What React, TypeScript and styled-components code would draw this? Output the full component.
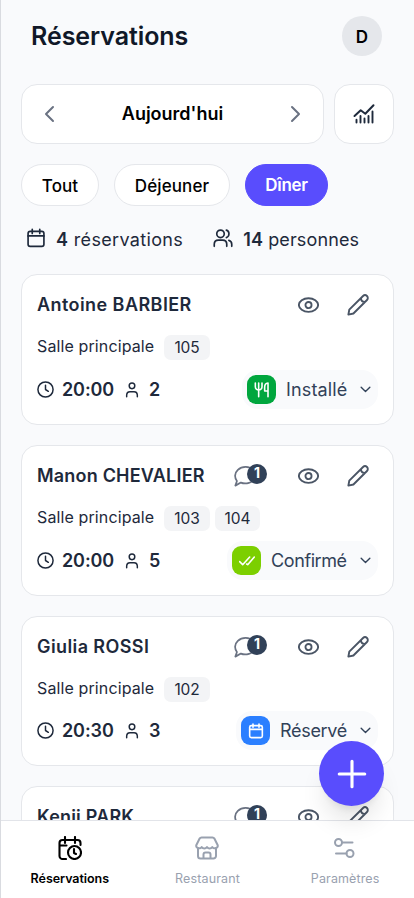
import React from 'react';
import styled, { createGlobalStyle } from 'styled-components';

const GlobalStyle = createGlobalStyle`
  *, *::before, *::after { box-sizing: border-box; }
  html, body { margin: 0; height: 100%; overflow: hidden; }
  body { font-family: Inter, "Liberation Sans", sans-serif; color: #1e293b; background: #f9fafc; }
  button { font: inherit; color: inherit; border: 0; background: none; padding: 0; margin: 0; }
  svg { display: block; flex: none; }
`;

const Screen = styled.div`
  height: 898px;
  display: flex;
  flex-direction: column;
  border-left: 1px solid #d9dbe0;
  background: #f9fafc;
  overflow: hidden;
`;
const Content = styled.main`
  flex: 1;
  min-height: 0;
  overflow: hidden;
  padding: 16px 20px 0;
`;
const Header = styled.header`
  display: flex;
  align-items: center;
  justify-content: space-between;
  height: 40px;
  padding: 0 12px 0 10px;
`;
const Title = styled.h1`
  margin: 0;
  font-size: 25px;
  line-height: 40px;
  font-weight: 600;
  letter-spacing: -0.07px;
  color: #101828;
`;
const Avatar = styled.div`
  width: 40px;
  height: 40px;
  border-radius: 50%;
  background: #e5e7eb;
  color: #000;
  font-size: 17px;
  font-weight: 600;
  line-height: 42px;
  text-align: center;
`;
const DateBar = styled.div`
  display: flex;
  gap: 10px;
  height: 60px;
  margin-top: 28px;
`;
const DateCard = styled.div`
  width: 303px;
  display: flex;
  align-items: center;
  justify-content: space-between;
  padding: 0 16px;
  border: 1px solid #e5e7eb;
  border-radius: 16px;
  background: #fff;
  color: #6a7282;
`;
const DateLabel = styled.span`
  padding-bottom: 1px;
  font-size: 18px;
  font-weight: 600;
  color: #000;
`;
const StatsButton = styled.button`
  width: 60px;
  display: flex;
  align-items: center;
  justify-content: center;
  border: 1px solid #e5e7eb;
  border-radius: 16px;
  background: #fff;
`;
const Filters = styled.div`
  display: flex;
  gap: 15px;
  height: 42px;
  margin-top: 20px;
`;
const Filter = styled.button<{ $width: number; $active?: boolean }>`
  width: ${p => p.$width}px;
  border-radius: 21px;
  border: 1px solid ${p => (p.$active ? '#594dfd' : '#e5e7eb')};
  background: ${p => (p.$active ? '#594dfd' : '#fff')};
  color: ${p => (p.$active ? '#fff' : '#000')};
  font-size: 17px;
  font-weight: ${p => (p.$active ? 600 : 500)};
  letter-spacing: ${p => (p.$active ? -0.3 : 0.1)}px;
  padding-top: ${p => (p.$active ? 0 : 2)}px;
`;
const Totals = styled.div`
  display: flex;
  gap: 30px;
  height: 28px;
  margin-top: 19px;
  padding-left: 5px;
`;
const Total = styled.div<{ $spacing: number }>`
  display: flex;
  align-items: center;
  gap: 10px;
  font-size: 18px;
  line-height: 28px;
  letter-spacing: ${p => p.$spacing}px;
  b { font-weight: 600; }
  span { padding-top: 1px; }
  svg { margin-bottom: 3px; }
`;
const List = styled.div`
  display: flex;
  flex-direction: column;
  gap: 20px;
  margin-top: 21px;
`;
const Card = styled.article`
  height: 151px;
  flex: none;
  padding: 0 15px;
  border: 1px solid #e5e7eb;
  border-radius: 16px;
  background: #fff;
  &:nth-child(3) { height: 150px; }
`;
const CardHead = styled.div`
  display: flex;
  align-items: center;
  height: 24px;
  margin-top: 18px;
`;
const Name = styled.h2<{ $spacing: number }>`
  flex: 1;
  margin: 0;
  font-size: 18px;
  line-height: 24px;
  font-weight: 600;
  letter-spacing: ${p => p.$spacing}px;
  white-space: nowrap;
`;
const Actions = styled.div`
  display: flex;
  align-items: center;
  gap: 28px;
  padding-right: 9px;
  color: #4a5565;
`;
const Notes = styled.div`
  position: relative;
  width: 36px;
  color: #6a7282;
`;
const NoteCount = styled.span`
  position: absolute;
  left: 13px;
  top: -1px;
  width: 20px;
  height: 20px;
  border-radius: 50%;
  background: #314158;
  color: #fff;
  font-size: 14px;
  line-height: 18px;
  font-weight: 700;
  text-align: center;
`;
const Place = styled.div`
  display: flex;
  align-items: center;
  height: 25px;
  margin-top: 18px;
  font-size: 16px;
  letter-spacing: 0.12px;
`;
const Room = styled.span`
  width: 127px;
  padding-bottom: 3px;
  white-space: nowrap;
`;
const Table = styled.span`
  width: 46px;
  height: 25px;
  margin-right: 5px;
  border-radius: 7px;
  background: #f3f4f6;
  text-align: center;
  font-size: 15.5px;
  line-height: 25px;
  letter-spacing: -0.1px;
  & + & { width: 45px; }
`;
const CardFoot = styled.div`
  display: flex;
  align-items: center;
  justify-content: space-between;
  height: 39px;
  margin-top: 10px;
  ${Card}:nth-child(3) & { margin-top: 9px; }
`;
const Facts = styled.div`
  display: flex;
  align-items: center;
  font-size: 18px;
  font-weight: 600;
`;
const Time = styled.span`
  width: 62px;
  margin-left: 8px;
  letter-spacing: -0.1px;
`;
const Guests = styled.span`
  margin-left: 9px;
`;
const Status = styled.button<{ $width: number }>`
  width: ${p => p.$width}px;
  height: 39px;
  display: flex;
  align-items: center;
  padding: 0 6px 0 5px;
  border-radius: 16px;
  background: #f9fafc;
  color: #314158;
  font-size: 18px;
`;
const StatusIcon = styled.span<{ $color: string }>`
  width: 29px;
  height: 29px;
  flex: none;
  display: flex;
  align-items: center;
  justify-content: center;
  border-radius: 9px;
  background: ${p => p.$color};
  color: #fff;
`;
const StatusText = styled.span<{ $spacing: number }>`
  flex: 1;
  margin-left: 10px;
  text-align: left;
  letter-spacing: ${p => p.$spacing}px;
`;
const Nav = styled.nav`
  height: 78px;
  flex: none;
  display: grid;
  grid-template-columns: repeat(3, 1fr);
  border-top: 1px solid #e2e4e9;
  background: #fff;
`;
const NavItem = styled.button<{ $active?: boolean }>`
  display: flex;
  flex-direction: column;
  align-items: center;
  padding-top: 15px;
  gap: 9px;
  color: ${p => (p.$active ? '#000' : '#99a1af')};
  font-size: 12.5px;
  line-height: 20px;
  font-weight: ${p => (p.$active ? 600 : 400)};
  letter-spacing: ${p => (p.$active ? -0.05 : 0.13)}px;
`;
const AddButton = styled.button`
  position: fixed;
  right: 30px;
  bottom: 92px;
  width: 65px;
  height: 65px;
  display: flex;
  align-items: center;
  justify-content: center;
  border-radius: 50%;
  background: #594dfd;
  color: #fff;
  box-shadow: 0 20px 25px -5px rgba(0,0,0,.1), 0 8px 10px -6px rgba(0,0,0,.1);
`;

const shapes: Record<string, React.ReactNode> = {
  left: <path d="m15 5-7 7 7 7" />,
  right: <path d="m9 5 7 7-7 7" />,
  down: <path d="m4 8 8 7.5L20 8" />,
  plus: <path d="M12 3v18M3 12h18" />,
  chart: (
    <>
      <path d="M2.5 14 8.7 8.3l4.6 3.4L21.5 3.2" />
      <path d="M4.5 20.5v-2.8M8.5 20.5V14M12.5 20.5v-4M16.5 20.5V14M20.5 20.5V9.5" strokeWidth="1.9" />
    </>
  ),
  calendar: (
    <>
      <rect x="2.5" y="4" width="19" height="18" rx="2.5" />
      <path d="M2.5 9.5h19M7.5 1.5v5M16.5 1.5v5" />
    </>
  ),
  users: (
    <>
      <circle cx="9" cy="7" r="4.5" />
      <path d="M1.5 22v-2.5c0-3 2-5 5-5h5c3 0 5 2 5 5V22M16 2.5c4 .8 4.4 7.6 0 9M19 14.8c2.3.6 3.5 2.2 3.5 4.7V22" />
    </>
  ),
  user: (
    <>
      <circle cx="12" cy="5.8" r="4.2" />
      <path d="M4 22v-2c0-3.5 2-5.5 5-5.5h6c3 0 5 2 5 5.5v2" />
    </>
  ),
  clock: (
    <>
      <circle cx="12" cy="12" r="10.7" />
      <path d="M12 6v6l4 2.5" />
    </>
  ),
  eye: (
    <>
      <path d="M1 11.5c0-4.2 5-7.8 11-7.8s11 3.6 11 7.8-5 7.8-11 7.8S1 15.700 1 11.500Z" />
      <circle cx="12" cy="11.5" r="3.5" />
    </>
  ),
  pencil: (
    <path d="M1.500 22.500 2.500 17 17.500 2.200a3 3 0 0 1 4.300 4.300L7 21.300 1.500 22.500ZM15.300 4.400c-.2 2.700 1.600 4.500 4.300 4.300" />
  ),
  comment: (
    <path d="M1.500 22.500 3.200 17.500C.2 13.900.7 8.600 4.200 5.300 9 .8 17 1.100 21 5.500c4.200 4.700 1.800 12.100-4.700 14-2.900.8-6.400.7-8.800-.3L1.500 22.500Z" />
  ),
  cutlery: (
    <path d="M2 1.500V7c0 6.500 10 6.500 10 0V1.500M7 1.500V22M21 22V1.500c-3.500 0-5 3-5 6.500v5.500h5" />
  ),
  checks: <path d="m1 13 4.500 4.500L16 6M11.500 16.500l1.500 1L23 6" />,
  booking: (
    <>
      <path d="M8 23H4.500a3 3 0 0 1-3-3V7a3 3 0 0 1 3-3h15a3 3 0 0 1 3 3v2M7 1v6M17 1v6M1.500 9.500h7" />
      <circle cx="16.5" cy="16.5" r="6.5" />
      <path d="M16 13v4l2 1" />
    </>
  ),
  shop: (
    <>
      <path d="M3 12v8a2.500 2.500 0 0 0 2.500 2.500h13A2.500 2.500 0 0 0 21 20v-8" />
      <path d="M6.500 1.500h11c1 0 1.500.5 2 1.200l3 6c.5 1.100.3 2.100-.5 2.800-1.300 1.200-3.400 1.200-4.700-.4-1.400 1.700-4 1.700-5.300 0-1.400 1.700-4 1.700-5.300 0-1.300 1.600-3.400 1.600-4.700.4-.8-.7-1-1.700-.5-2.800l3-6c.5-.7 1-1.200 2-1.200ZM8.500 22v-3.500c0-1.500.8-2 2-2h3c1.200 0 2 .5 2 2V22" />
    </>
  ),
  sliders: (
    <>
      <circle cx="5.5" cy="6.5" r="3.5" />
      <path d="M9 6.500h10.500M3 17.500h10.500" />
      <circle cx="17" cy="17.5" r="3.500" />
    </>
  ),
};

function Icon({ name, size, stroke = 1.8 }: { name: string; size: number; stroke?: number }) {
  return (
    <svg width={size} height={size} viewBox="0 0 24 24" fill="none" stroke="currentColor"
      strokeWidth={stroke} strokeLinecap="round" strokeLinejoin="round">
      {shapes[name]}
    </svg>
  );
}

const statuses = {
  seated: { text: 'Installé', icon: 'cutlery', color: '#00a63e', width: 136, spacing: 0.15 },
  confirmed: { text: 'Confirmé', icon: 'checks', color: '#7ccf00', width: 151, spacing: -0.4 },
  booked: { text: 'Réservé', icon: 'calendar', color: '#2b7fff', width: 142, spacing: -0.3 },
};

const bookings: { name: string; spacing: number; tables: string[]; time: string; guests: number; status: keyof typeof statuses; notes: number }[] = [
  { name: 'Antoine BARBIER', spacing: 0.43, tables: ['105'], time: '20:00', guests: 2, status: 'seated', notes: 0 },
  { name: 'Manon CHEVALIER', spacing: 0.2, tables: ['103', '104'], time: '20:00', guests: 5, status: 'confirmed', notes: 1 },
  { name: 'Giulia ROSSI', spacing: 0.4, tables: ['102'], time: '20:30', guests: 3, status: 'booked', notes: 1 },
  { name: 'Kenji PARK', spacing: 0.2, tables: ['101'], time: '21:00', guests: 4, status: 'booked', notes: 1 },
];

function Booking({ name, spacing, tables, time, guests, status, notes }: (typeof bookings)[number]) {
  const s = statuses[status];
  return (
    <Card>
      <CardHead>
        <Name $spacing={spacing}>{name}</Name>
        <Actions>
          {notes > 0 && (
            <Notes>
              <Icon name="comment" size={22} stroke={1.9} />
              <NoteCount>{notes}</NoteCount>
            </Notes>
          )}
          <Icon name="eye" size={21} stroke={2.1} />
          <Icon name="pencil" size={22} stroke={2.1} />
        </Actions>
      </CardHead>
      <Place>
        <Room>Salle principale</Room>
        {tables.map(t => <Table key={t}>{t}</Table>)}
      </Place>
      <CardFoot>
        <Facts>
          <Icon name="clock" size={17} stroke={2.1} />
          <Time>{time}</Time>
          <Icon name="user" size={16} stroke={2.2} />
          <Guests>{guests}</Guests>
        </Facts>
        <Status $width={s.width}>
          <StatusIcon $color={s.color}>
            <Icon name={s.icon} size={16} stroke={2.4} />
          </StatusIcon>
          <StatusText $spacing={s.spacing}>{s.text}</StatusText>
          <Icon name="down" size={13} stroke={2.6} />
        </Status>
      </CardFoot>
    </Card>
  );
}

export default function App() {
  return (
    <>
      <GlobalStyle />
      <Screen>
        <Content>
          <Header>
            <Title>Réservations</Title>
            <Avatar>D</Avatar>
          </Header>
          <DateBar>
            <DateCard>
              <Icon name="left" size={24} stroke={2} />
              <DateLabel>Aujourd'hui</DateLabel>
              <Icon name="right" size={24} stroke={2} />
            </DateCard>
            <StatsButton><Icon name="chart" size={24} stroke={2} /></StatsButton>
          </DateBar>
          <Filters>
            <Filter $width={78}>Tout</Filter>
            <Filter $width={116}>Déjeuner</Filter>
            <Filter $width={83} $active>Dîner</Filter>
          </Filters>
          <Totals>
            <Total $spacing={0.34}><Icon name="calendar" size={20} stroke={2} /><span><b>4</b> réservations</span></Total>
            <Total $spacing={0.12}><Icon name="users" size={20} stroke={2} /><span><b>14</b> personnes</span></Total>
          </Totals>
          <List>
            {bookings.map(b => <Booking key={b.name} {...b} />)}
          </List>
        </Content>
        <Nav>
          <NavItem $active><Icon name="booking" size={24} stroke={2.1} />Réservations</NavItem>
          <NavItem><Icon name="shop" size={24} stroke={2} />Restaurant</NavItem>
          <NavItem><Icon name="sliders" size={24} stroke={2} />Paramètres</NavItem>
        </Nav>
      </Screen>
      <AddButton><Icon name="plus" size={34} stroke={2.2} /></AddButton>
    </>
  );
}
